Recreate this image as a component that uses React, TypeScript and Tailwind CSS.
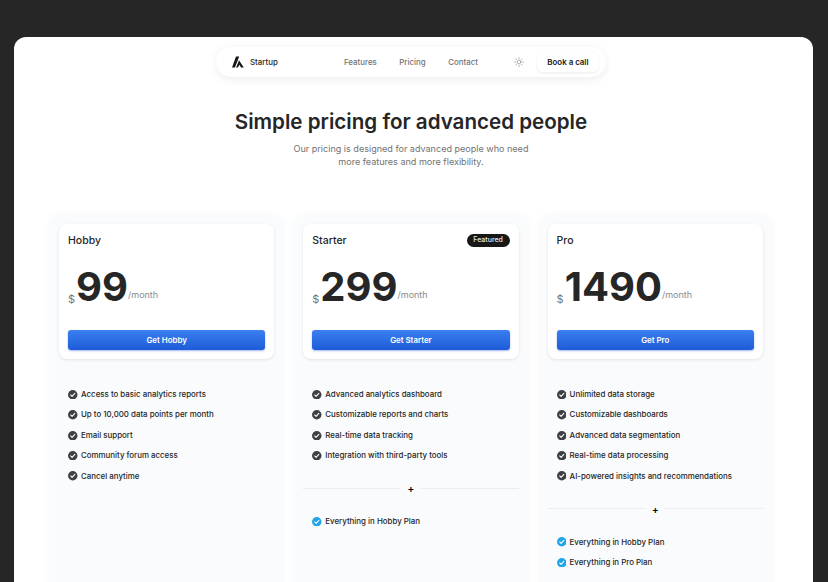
import React from "react";

function Check({ blue }: { blue?: boolean }) {
  return (
    <svg width="9.5" height="9.5" viewBox="0 0 20 20" className="shrink-0">
      <circle cx="10" cy="10" r="10" fill={blue ? "#1fa5e8" : "#3f3f46"} />
      <path d="M5.6 10.4l3 3 5.8-6.4" fill="none" stroke="#fff" strokeWidth="2.2" strokeLinecap="round" strokeLinejoin="round" />
    </svg>
  );
}

function Item({ text, blue }: { text: string; blue?: boolean }) {
  return (
    <li className="flex h-[11px] items-center gap-[3.5px] text-[7.9px] font-medium leading-[11px] text-[#262626]">
      <Check blue={blue} />
      <span>{text}</span>
    </li>
  );
}

function Plan({
  name,
  price,
  cta,
  featured,
  items,
  extras,
}: {
  name: string;
  price: string;
  cta: string;
  featured?: boolean;
  items: string[];
  extras?: string[];
}) {
  return (
    <div className="h-[400px] w-[235.3px] shrink-0 rounded-t-[12px] bg-[#fafbfc] px-[10px] pt-[10px] shadow-[0_0_5px_rgba(245,248,251,0.8)]">
      <div className="h-[135px] rounded-[8px] bg-white px-[9px] pt-[10px] shadow-[0_1px_3px_rgba(0,0,0,0.1)]">
        <div className="flex h-[13px] items-center justify-between">
          <span className="text-[10.5px] font-medium leading-[13px] text-[#262626]">{name}</span>
          {featured && (
            <span className="flex h-[13px] w-[43px] items-center justify-center rounded-full bg-[#171717] text-[7px] font-medium text-[#e5e5e5]">
              Featured
            </span>
          )}
        </div>
        <div className="mt-[17px] flex h-[46px] items-end">
          <span className="mb-[5px] mr-[1px] text-[11px] leading-[11px] text-[#737373]">$</span>
          <span className="text-[40px] font-bold leading-[46px] text-[#262626]">{price}</span>
          <span className="mb-[9px] text-[9px] leading-[12px] text-[#8a8a8a]">/month</span>
        </div>
        <button className="mt-[20px] flex h-[20px] w-full items-center justify-center rounded-[3px] bg-gradient-to-b from-[#3b7ff0] to-[#1d5bd8] pt-[1px] text-[7.9px] font-semibold text-white shadow-[0_1px_2px_rgba(29,78,216,0.4)]">
          {cta}
        </button>
      </div>
      <ul className="mt-[30px] flex flex-col gap-[9.4px] px-[9px]">
        {items.map((t) => (
          <Item key={t} text={t} />
        ))}
      </ul>
      {extras && (
        <>
          <div className="mt-[17px] flex h-[20px] items-center">
            <div className="h-px flex-1 bg-[#ececec]" />
            <span className="flex w-[20px] justify-center text-[10px] font-semibold leading-none text-black">+</span>
            <div className="h-px flex-1 bg-[#ececec]" />
          </div>
          <ul className="mt-[18px] flex flex-col gap-[9.4px] px-[9px]">
            {extras.map((t) => (
              <Item key={t} text={t} blue />
            ))}
          </ul>
        </>
      )}
    </div>
  );
}

export default function App() {
  return (
    <div className="h-[582px] w-[828px] overflow-hidden bg-[#262626] pt-[37px] pl-[14px] font-['Inter',sans-serif]">
      <div className="h-[600px] w-[799px] rounded-t-[12px] bg-white pt-[10px] pr-[5px]">
        <nav className="mx-auto flex h-[30px] w-[390px] items-center rounded-full bg-white pl-[16px] text-[7.9px] shadow-[0_2px_10px_rgba(0,0,0,0.08)]">
          <svg width="12" height="12" viewBox="0 0 12 12" className="shrink-0">
            <path d="M4 0.5h3.2L3 11.5H0z" fill="#171717" />
            <path d="M7 4.2l4.8 7.3H9L7.4 8.8 6 11.5H4.2z" fill="#171717" />
          </svg>
          <span className="ml-[6px] w-[29px] pt-[1px] font-medium text-[#262626]">Startup</span>
          <div className="ml-[65px] flex gap-[22.5px] pt-[1px] font-medium text-[#737373]">
            <span>Features</span>
            <span>Pricing</span>
            <span>Contact</span>
          </div>
          <svg width="10" height="10" viewBox="0 0 24 24" fill="none" stroke="#8a8a8a" strokeWidth="1.6" strokeLinecap="round" className="ml-[36px] shrink-0">
            <circle cx="12" cy="12" r="4.5" />
            <path d="M12 1.5v2.5M12 20v2.5M1.5 12H4M20 12h2.5M4.6 4.6l1.8 1.8M17.6 17.6l1.8 1.8M4.6 19.4l1.8-1.8M17.6 6.4l1.8-1.8" />
          </svg>
          <button className="ml-[13.5px] flex h-[20px] w-[61px] items-center justify-center rounded-[5px] bg-white pt-[1px] font-semibold text-[#171717] shadow-[0_1px_3px_rgba(0,0,0,0.08)]">
            Book a call
          </button>
        </nav>
        <h1 className="mt-[31px] text-center text-[20.6px] font-semibold leading-[28px] text-[#262626]">
          Simple pricing for advanced people
        </h1>
        <p className="mt-[6px] text-center text-[9.05px] leading-[13px] text-[#737373]">
          Our pricing is designed for advanced people who need
          <br />
          more features and more flexibility.
        </p>
        <div className="ml-[35px] mt-[46px] flex gap-[9px]">
          <Plan
            name="Hobby"
            price="99"
            cta="Get Hobby"
            items={[
              "Access to basic analytics reports",
              "Up to 10,000 data points per month",
              "Email support",
              "Community forum access",
              "Cancel anytime",
            ]}
          />
          <Plan
            name="Starter"
            price="299"
            cta="Get Starter"
            featured
            items={[
              "Advanced analytics dashboard",
              "Customizable reports and charts",
              "Real-time data tracking",
              "Integration with third-party tools",
            ]}
            extras={["Everything in Hobby Plan"]}
          />
          <Plan
            name="Pro"
            price="1490"
            cta="Get Pro"
            items={[
              "Unlimited data storage",
              "Customizable dashboards",
              "Advanced data segmentation",
              "Real-time data processing",
              "AI-powered insights and recommendations",
            ]}
            extras={["Everything in Hobby Plan", "Everything in Pro Plan"]}
          />
        </div>
      </div>
    </div>
  );
}
